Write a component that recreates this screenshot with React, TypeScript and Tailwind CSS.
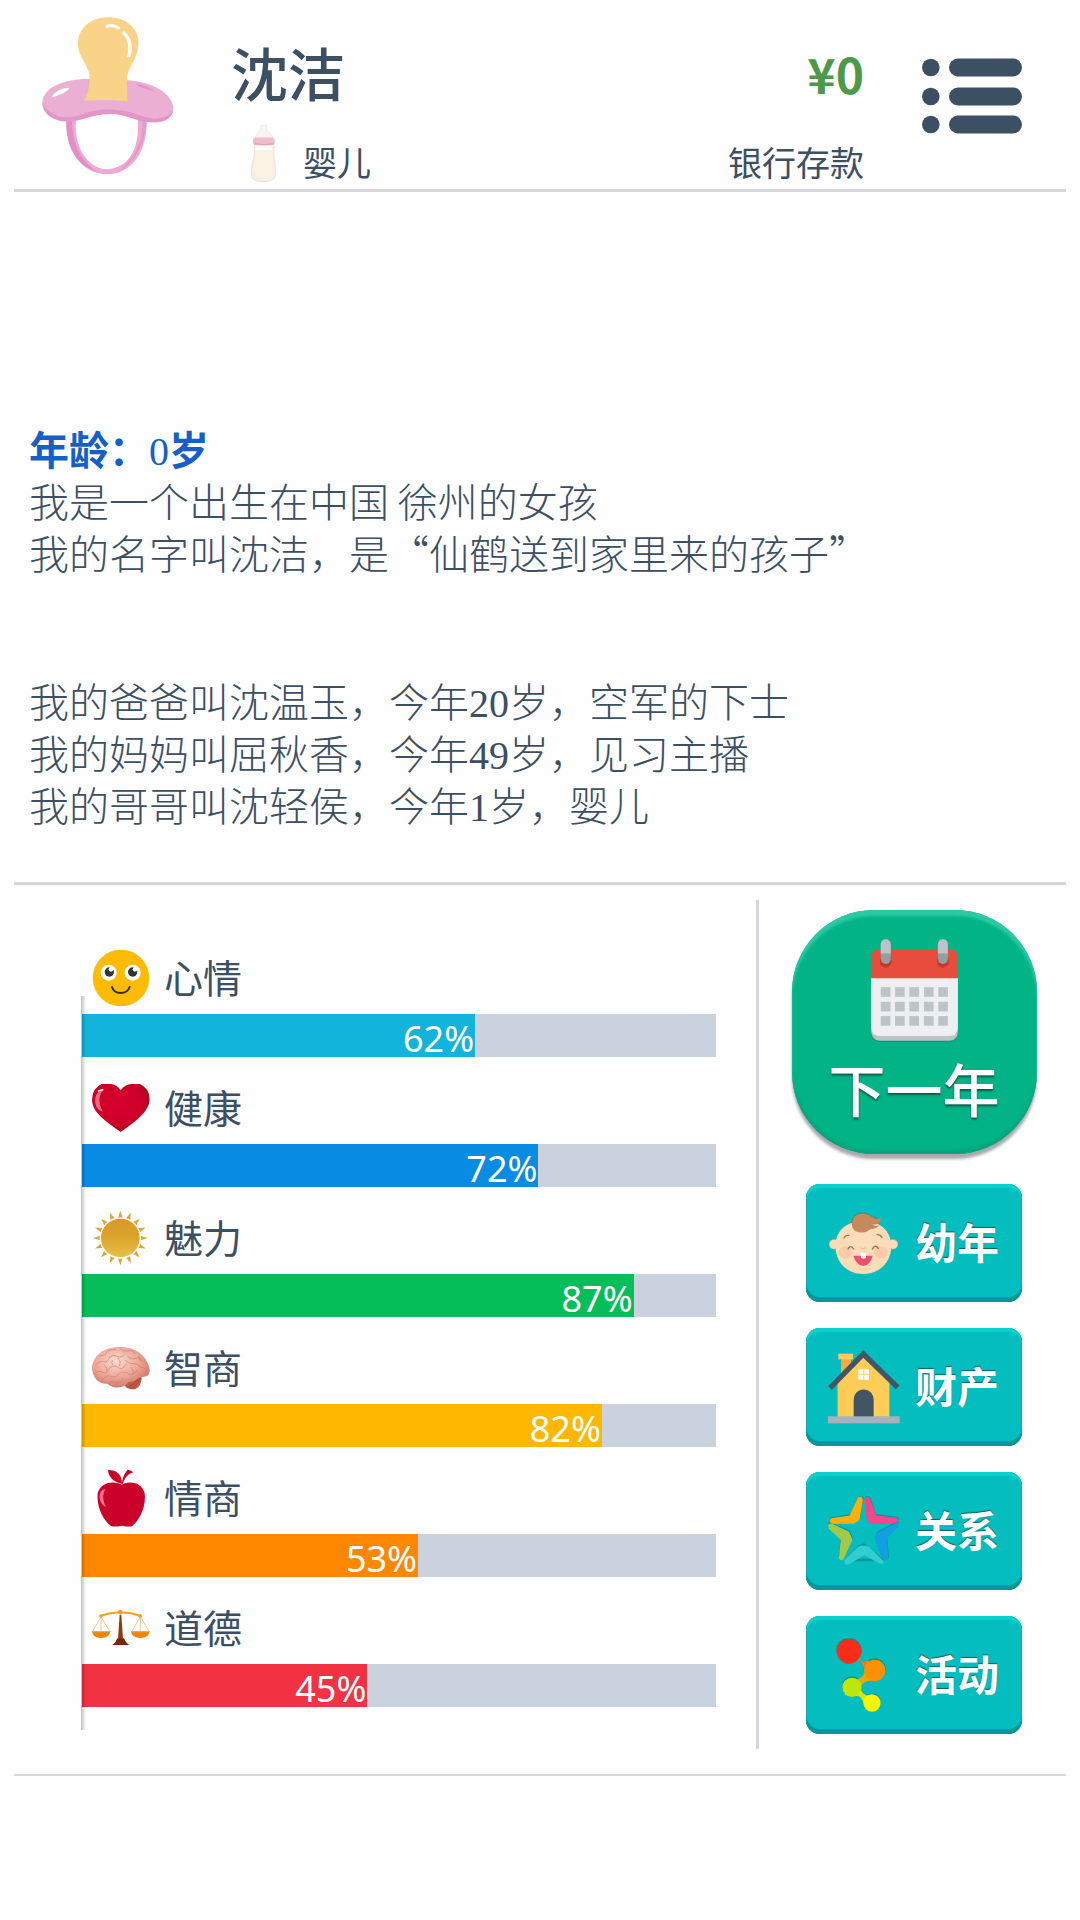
import React from "react";

const SUN_RAYS = Array.from({ length: 16 }, (_, i) => i * 22.5);

function PacifierIcon() {
  return (
    <svg viewBox="124 50 383 474" preserveAspectRatio="none" className="h-[158px] w-[132px] shrink-0" aria-hidden="true">
      <path d="M194 350C188 450 240 520 312 522C385 522 434 450 427 350L401 345C410 430 385 504 312 507C252 505 212 430 224 350Z" fill="#ecaad4" />
      <path d="M196 362C192 445 232 500 280 512C240 480 208 430 212 355Z" fill="#e18fc5" />
      <path d="M427 362C426 425 395 490 345 514C385 480 420 430 415 355Z" fill="#e59acb" />
      <path d="M262 236C190 234 125 262 125 307C125 345 165 364 200 363C240 363 270 338 322 338C372 338 390 365 452 366C482 366 505 350 505 322C500 272 430 240 360 240Z" fill="#ecafd4" />
      <path d="M126 310C128 345 165 364 200 363C240 363 270 341 322 341C372 341 390 365 452 366C482 366 503 350 505 330C490 355 450 360 415 348C370 326 290 318 240 342C195 360 150 350 126 310Z" fill="#e495c8" />
      <path d="M395 250C415 252 435 260 450 272C430 268 410 262 395 250Z" fill="#e495c8" />
      <path d="M316 51C265 51 228 85 228 130C228 172 262 195 262 230C262 262 256 284 246 301Q310 296 372 303L370 240C370 200 404 180 404 125C402 80 365 51 316 51Z" fill="#f8d388" />
      <path d="M313 78Q330 72 346 83M362 98C380 118 384 140 376 166" fill="none" stroke="#fff" strokeWidth="10" strokeLinecap="round" />
      <path d="M156 288C166 274 182 266 200 265C188 277 172 282 156 288Z" fill="#fff" stroke="#fff" strokeWidth="5" strokeLinejoin="round" />
    </svg>
  );
}

function BottleIcon() {
  return (
    <svg viewBox="729 374 74 172" preserveAspectRatio="none" className="h-[57px] w-[25px] shrink-0" aria-hidden="true">
      <path d="M757 377Q766 373 775 377V390Q790 398 795 416H740Q744 398 757 390Z" fill="#faf3ef" stroke="#eee3df" strokeWidth="2" />
      <path d="M739 430H797V455C797 475 801 485 801 510V528Q799 545 766 545Q733 545 731 528V508C731 485 739 475 739 455Z" fill="#f6efe9" stroke="#e6dad4" strokeWidth="2" />
      <path d="M744 452H790V470C790 485 794 495 794 510Q794 533 766 533Q738 533 738 510C738 495 744 485 744 470Z" fill="#fcf3e4" />
      <path d="M742 438H792V450H742Z" fill="#fffdfb" />
      <rect x="735" y="412" width="64" height="22" rx="7" fill="#f1bcc9" />
      <path d="M738 430Q767 437 797 430" stroke="#e3a2b4" strokeWidth="3" fill="none" />
    </svg>
  );
}

function MenuIcon() {
  return (
    <svg viewBox="0 0 100 76" className="h-[76px] w-[100px]" fill="#3c4f63" aria-hidden="true">
      {[0, 29, 57].map((y) => (
        <g key={y}>
          <circle cx="8.8" cy={y + 9.5} r="8.8" />
          <rect x="27" y={y + 0.5} width="73" height="18" rx="9" />
        </g>
      ))}
    </svg>
  );
}

function SmileIcon() {
  return (
    <svg viewBox="97 86 174 174" className="h-full w-full">
      <circle cx="184" cy="173" r="85" fill="#fdbc02" />
      <circle cx="147" cy="157" r="24" fill="#fff" />
      <circle cx="219" cy="157" r="24" fill="#fff" />
      <circle cx="149" cy="155" r="14" fill="#303438" />
      <circle cx="219" cy="155" r="14" fill="#303438" />
      <circle cx="154" cy="147" r="7" fill="#fff" />
      <circle cx="226" cy="147" r="7" fill="#fff" />
      <path d="M157 200C164 224 202 224 210 200" fill="none" stroke="#33302a" strokeWidth="6" strokeLinecap="round" />
    </svg>
  );
}

function HeartIcon() {
  return (
    <svg viewBox="97 476 174 174" className="h-full w-full">
      <defs>
        <radialGradient id="heart" cx="0.45" cy="0.4" r="0.65">
          <stop offset="0" stopColor="#d8002f" />
          <stop offset="0.65" stopColor="#cc0028" />
          <stop offset="1" stopColor="#a10719" />
        </radialGradient>
      </defs>
      <path d="M183 510Q195 492 216 491H240Q270 503 270 538C268 575 225 605 183 635C140 603 98 578 97 538Q98 503 126 491H155Q173 494 183 510Z" fill="url(#heart)" />
      <path d="M110 560C100 530 112 512 131 510C116 524 116 550 130 575Q118 572 110 560Z" fill="#ee8c9c" opacity="0.75" />
      <path d="M116 512L130 508" stroke="#fff" strokeWidth="4" strokeLinecap="round" />
    </svg>
  );
}

function SunIcon() {
  return (
    <svg viewBox="97 865 174 174" className="h-full w-full">
      <defs>
        <linearGradient id="sun" x1="0" y1="0" x2="0" y2="1">
          <stop offset="0" stopColor="#d8982a" />
          <stop offset="0.5" stopColor="#dda42c" />
          <stop offset="1" stopColor="#e8c04e" />
        </linearGradient>
      </defs>
      <circle cx="182" cy="952" r="58" fill="url(#sun)" />
      {SUN_RAYS.map((a) => (
        <path key={a} d="M182 870L189 891Q182 888 175 891Z" transform={`rotate(${a} 182 952)`} fill="#dca634" />
      ))}
    </svg>
  );
}

function BrainIcon() {
  return (
    <svg viewBox="97 54 174 174" className="h-full w-full">
      <defs>
        <radialGradient id="brain" cx="0.42" cy="0.35" r="0.7">
          <stop offset="0" stopColor="#fbd9cf" />
          <stop offset="0.55" stopColor="#eda898" />
          <stop offset="1" stopColor="#cf7060" />
        </radialGradient>
      </defs>
      <path d="M196 180L246 164C247 185 238 203 222 205C208 206 195 200 194 190Z" fill="#c05c4c" />
      <path d="M207 198Q226 190 238 170M216 202Q236 190 243 168" stroke="#93382f" strokeWidth="2" fill="none" />
      <path d="M97 144C98 105 130 78 180 78C225 76 262 102 270 145C271 162 262 168 247 168C235 172 225 182 206 184C195 202 165 206 143 188C120 190 100 174 97 144Z" fill="url(#brain)" />
      <path
        d="M108 132Q120 118 132 122T150 108Q160 98 172 106T196 98M120 105Q138 104 142 94T168 86M180 82Q190 94 206 90T226 98M104 158Q118 146 130 154T150 140Q164 130 176 140T200 128M128 176Q140 160 154 166T178 158Q192 148 206 158T232 148M146 188Q156 176 168 184T190 172M204 106Q214 118 228 112T248 122M196 118Q210 130 222 128T240 138Q252 136 262 150M134 132Q146 142 142 150M176 112Q186 122 180 134M214 140Q224 146 220 158M158 118Q152 126 160 132M240 104Q236 112 240 118"
        stroke="#c57d71"
        strokeWidth="2"
        fill="none"
        strokeLinecap="round"
      />
    </svg>
  );
}

function AppleIcon() {
  return (
    <svg viewBox="97 442 174 174" className="h-full w-full" fill="#cb002b">
      <path d="M186 486C165 482 146 468 145 445C170 444 184 458 187 480C190 462 198 450 204 444Q216 446 221 452C205 456 194 470 190 486Z" />
      <path d="M187 489C205 478 245 478 255 515C260 555 240 595 217 614Q205 616 187 612Q170 616 156 614C130 597 110 555 114 515C125 478 165 478 187 489Z" />
      <path d="M122 538C116 518 122 504 138 503C128 515 128 535 139 556Q128 552 122 538Z" fill="#f29aa8" opacity="0.75" />
    </svg>
  );
}

function ScalesIcon() {
  return (
    <svg viewBox="97 831 174 174" className="h-full w-full">
      <path d="M124 884L99 928M124 884L150 928M242 884L217 928M242 884L268 928M124 884V926M242 884V926" stroke="#d9b078" strokeWidth="2" fill="none" />
      <path d="M122 882Q150 872 182 871Q215 872 244 882" stroke="#f2a01e" strokeWidth="6" fill="none" strokeLinecap="round" />
      <circle cx="182" cy="870" r="7" fill="#f2a01e" />
      <circle cx="124" cy="882" r="5" fill="#f2a01e" />
      <circle cx="242" cy="882" r="5" fill="#f2a01e" />
      <path d="M97 927H152Q150 948 124 948Q99 948 97 927ZM214 927H270Q268 948 242 948Q216 948 214 927Z" fill="#ee8407" />
      <path d="M97 927H152V931H97ZM214 927H270V931H214Z" fill="#f7aa3d" />
      <path d="M180 878H185L190 950H175Z" fill="#8a3c0c" />
      <path d="M173 949H193Q196 960 208 969H158Q170 960 173 949Z" fill="#6f2a07" />
    </svg>
  );
}

function CalendarIcon() {
  return (
    <svg viewBox="393 173 261 310" className="h-[103px] w-[87px]" aria-hidden="true">
      <path d="M393 290H654V460Q650 483 630 483H418Q395 481 393 460Z" fill="#0b7d62" opacity="0.5" />
      <path d="M393 290H654V452Q652 479 630 479H418Q395 477 393 452Z" fill="#bcc4c8" />
      <path d="M393 290H654V440Q652 465 630 465H418Q395 463 393 440Z" fill="#edeff1" />
      <path d="M393 291V228Q395 204 418 204H630Q652 204 654 228V291Z" fill="#e74c3c" />
      {[437, 609].map((x) => (
        <g key={x}>
          <circle cx={x} cy="241" r="18" fill="#c0392b" />
          <rect x={x - 15} y="174" width="30" height="74" rx="15" fill="#929ea1" />
          <path d={`M${x - 15} 217V189A15 15 0 0 1 ${x + 15} 189V217Z`} fill="#bcc4c8" />
        </g>
      ))}
      {[318, 362, 405].map((y) =>
        [422, 465, 508, 552, 595].map((x) => (
          <rect key={`${x}-${y}`} x={x} y={y} width="29" height="29" fill="#bcc4c8" />
        )),
      )}
    </svg>
  );
}

function BabyIcon() {
  return (
    <svg viewBox="145 107 216 222" className="h-full w-full">
      <circle cx="163" cy="222" r="15" fill="#fbdcb8" stroke="#a98f6d" strokeWidth="1.5" />
      <circle cx="340" cy="222" r="15" fill="#fbdcb8" stroke="#a98f6d" strokeWidth="1.5" />
      <path d="M250 152C300 152 333 180 335 226C335 275 300 311 250 311C202 311 167 275 167 226C168 180 202 152 250 152Z" fill="#fbdcb8" />
      <ellipse cx="198" cy="246" rx="21" ry="18" fill="#fac7a5" opacity="0.8" />
      <ellipse cx="304" cy="246" rx="21" ry="18" fill="#fac7a5" opacity="0.8" />
      <path d="M217 166C210 140 235 128 255 130C272 130 280 142 290 146Q300 148 303 140C305 158 295 163 278 163C290 168 296 166 300 163C290 176 277 174 270 178C255 190 232 188 224 180Q218 174 217 166Z" fill="#c58a5c" />
      <path d="M217 158C215 134 240 124 262 130Q282 142 292 144" fill="none" stroke="#7e6548" strokeWidth="2" />
      <path d="M193 203Q197 194 208 195M292 193Q303 192 307 202" fill="none" stroke="#a77950" strokeWidth="4" strokeLinecap="round" />
      <path d="M205 236Q213 222 222 236M278 236Q287 220 296 234" fill="none" stroke="#8a6b4c" strokeWidth="4" strokeLinecap="round" />
      <path d="M243 233Q250 240 257 233" fill="none" stroke="#efb48e" strokeWidth="3" strokeLinecap="round" />
      <path d="M221 256H279Q272 284 251 287Q229 284 221 256Z" fill="#ed4f6f" />
      <path d="M242 248Q251 246 259 250V262Q251 268 244 262Z" fill="#fff" />
      <path d="M238 297Q250 303 262 297" fill="none" stroke="#f1bf95" strokeWidth="2" />
    </svg>
  );
}

function HouseIcon() {
  return (
    <svg viewBox="145 539 216 222" className="h-full w-full">
      <path d="M184 566H214V590L184 618Z" fill="#f8a93c" />
      <rect x="176" y="550" width="44" height="17" fill="#ffcb57" />
      <path d="M174 632L251 558L329 632V741H174Z" fill="#ffcd58" />
      <path d="M200 655V741H174V632Z" fill="#fdc451" opacity="0.5" />
      <path d="M151 653L251 551L354 651" fill="none" stroke="#425567" strokeWidth="16" strokeLinejoin="miter" />
      <rect x="236" y="597" width="32" height="31" rx="3" fill="#fff" />
      <path d="M252 597V628M236 612H268" stroke="#ffd985" strokeWidth="4" />
      <path d="M222 741V690C222 647 282 647 282 690V741Z" fill="#425567" />
      <rect x="145" y="738" width="215" height="21" fill="#a9b1bf" />
    </svg>
  );
}

function StarIcon() {
  return (
    <svg viewBox="145 131 216 222" className="h-full w-full" strokeLinejoin="round">
      <g transform="translate(0 -3)" opacity="0.35" fill="none" stroke="#0b4f5a" strokeWidth="8">
        <path d="M240 144L248 146L236 210L220 218L154 216L155 208L215 198Z" />
        <path d="M260 144L268 144L286 197L352 206V214L275 219L265 205Z" />
        <path d="M352 219L318 265L324 325L314 328L290 268L296 250Z" />
        <path d="M200 332L240 290L253 286L308 332Z" />
        <path d="M150 222L206 246L216 268L190 325L182 326L186 270Z" />
      </g>
      <g strokeWidth="5">
        <path d="M238 142Q248 140 247 150L237 208L222 218H160Q150 216 155 206L211 198Z" fill="#fdb00c" stroke="#fdb00c" />
        <path d="M260 142Q268 140 270 150L288 197L350 205Q356 211 350 215L275 219L264 205L257 150Z" fill="#f5468b" stroke="#f5468b" />
        <path d="M352 220Q356 224 354 228L318 265L324 324Q320 328 314 326L288 270L294 250Z" fill="#149fe2" stroke="#149fe2" />
        <path d="M197 330L236 292Q251 284 267 292L308 332Q310 340 302 338L253 312L206 340Q195 342 197 330Z" fill="#32cdd0" stroke="#32cdd0" />
        <path d="M148 224Q152 220 160 224L206 246L216 268L190 325Q184 330 180 324L186 268L150 234Z" fill="#a2c94a" stroke="#a2c94a" />
      </g>
    </svg>
  );
}

function MoleculeIcon() {
  return (
    <svg viewBox="145 563 216 222" className="h-full w-full">
      <g fill="#0b5f60" opacity="0.45">
        <circle cx="208" cy="600" r="38" />
        <circle cx="285" cy="657" r="33" />
        <circle cx="217" cy="708" r="30" />
        <circle cx="277" cy="756" r="27" />
      </g>
      <path d="M228 625Q250 640 268 630V660Q245 650 240 620Z" fill="#fb7a08" />
      <path d="M256 650C258 675 245 684 230 688L240 722C240 700 262 688 285 690Z" fill="#e9a90b" />
      <path d="M225 738C245 732 248 750 256 768L277 732C262 738 248 735 242 712Z" fill="#d6ec08" />
      <circle cx="208" cy="603" r="37" fill="#fb2d1a" />
      <circle cx="285" cy="660" r="32" fill="#fd9106" />
      <circle cx="217" cy="711" r="29" fill="#bde60d" />
      <circle cx="277" cy="758" r="26" fill="#f9f403" />
    </svg>
  );
}

type Stat = { label: string; value: number; color: string; Icon: () => React.ReactElement };

const STATS: Stat[] = [
  { label: "心情", value: 62, color: "bg-[#13b4dc]", Icon: SmileIcon },
  { label: "健康", value: 72, color: "bg-[#078be3]", Icon: HeartIcon },
  { label: "魅力", value: 87, color: "bg-[#05be59]", Icon: SunIcon },
  { label: "智商", value: 82, color: "bg-[#ffb700]", Icon: BrainIcon },
  { label: "情商", value: 53, color: "bg-[#ff8700]", Icon: AppleIcon },
  { label: "道德", value: 45, color: "bg-[#f23142]", Icon: ScalesIcon },
];

const ACTIONS = [
  { label: "幼年", Icon: BabyIcon },
  { label: "财产", Icon: HouseIcon },
  { label: "关系", Icon: StarIcon },
  { label: "活动", Icon: MoleculeIcon },
];

const BIRTH = ["我是一个出生在中国 徐州的女孩", "我的名字叫沈洁，是“仙鹤送到家里来的孩子”"];
const FAMILY = [
  "我的爸爸叫沈温玉，今年20岁，空军的下士",
  "我的妈妈叫屈秋香，今年49岁，见习主播",
  "我的哥哥叫沈轻侯，今年1岁，婴儿",
];

/* Numerals are set in a serif face, the surrounding text in the CJK face. */
function StoryLine({ text }: { text: string }) {
  return (
    <p>
      {text.split(/(\d+)/).map((part, i) =>
        /^\d+$/.test(part) ? (
          <span key={i} className="font-['Liberation_Serif',serif] leading-none font-normal">
            {part}
          </span>
        ) : (
          part
        ),
      )}
    </p>
  );
}

function StatRow({ label, value, color, Icon }: Stat) {
  return (
    <li className="pt-[22px]">
      <div className="flex h-[58px] items-start gap-[14px] pl-[10px]">
        <span className="h-[58px] w-[58px]" aria-hidden="true">
          <Icon />
        </span>
        <span className="text-[39px] leading-[54px]">{label}</span>
      </div>
      <div
        className="mt-[7px] h-[43px] bg-[#c9d2dd]"
        role="progressbar"
        aria-label={label}
        aria-valuenow={value}
        aria-valuemin={0}
        aria-valuemax={100}
      >
        <div className={`flex h-full justify-end pr-px ${color}`} style={{ width: `${value}%` }}>
          <span className="font-['Noto_Sans',sans-serif] text-[36px] leading-[50px] text-white">{value}%</span>
        </div>
      </div>
    </li>
  );
}

export default function App() {
  return (
    <main
      lang="zh-CN"
      className="min-h-screen bg-[#fefefe] px-[14px] font-['Noto_Sans_CJK_SC',sans-serif] text-[#3c4f63]"
    >
      <header className="flex border-b-[3px] border-[#d6d6dc] pr-[44px] pb-[7px] pl-[28px]">
        <div className="pt-[17px]">
          <PacifierIcon />
        </div>
        <div className="ml-[57px] flex flex-1 flex-col gap-6 pt-[41px]">
          <h1 className="text-[57px] leading-[60px] font-medium">沈洁</h1>
          <div className="flex items-end gap-[27px] pl-[20px]">
            <BottleIcon />
            <span className="text-[34px] leading-[40px]">婴儿</span>
          </div>
        </div>
        <div className="flex flex-col justify-between pt-[41px] text-right">
          <strong className="text-[48px] leading-[64px] font-bold text-[#4c9a48]">¥0</strong>
          <span className="text-[34px] leading-[40px]">银行存款</span>
        </div>
        <button type="button" aria-label="菜单" className="mt-[58px] ml-[58px] h-[76px] w-[100px]">
          <MenuIcon />
        </button>
      </header>

      <section className="flex min-h-[693px] flex-col justify-end border-b-[3px] border-[#d6d6dc] px-[15px] pb-[52px] text-[40px] leading-[52px] font-light">
        <h2 className="font-bold text-[#1560c6]">
          <StoryLine text="年龄：0岁" />
        </h2>
        {BIRTH.map((t) => (
          <StoryLine key={t} text={t} />
        ))}
        <div className="mt-24">
          {FAMILY.map((t) => (
            <StoryLine key={t} text={t} />
          ))}
        </div>
      </section>

      <section className="flex border-b-2 border-[#d8d8da] pt-[15px] pb-[25px]">
        <div className="flex-1 pr-[40px] pl-[68px]">
          <div className="relative pt-[27px]">
            <ul>
              {STATS.map((s) => (
                <StatRow key={s.label} {...s} />
              ))}
            </ul>
            <div className="absolute top-[96px] -bottom-[23px] -left-px w-[5px] bg-linear-to-r from-black/25 to-black/0" />
          </div>
        </div>
        <div className="flex w-[310px] flex-col items-center border-l-[3px] border-[#d6d6dc] pt-[10px] pb-[15px] pl-[3px]">
          <button
            type="button"
            className="flex h-[244px] w-[245px] flex-col items-center rounded-[82px] bg-[#02b386] pt-[29px] shadow-[inset_0_6px_3px_#2bcaa3,inset_0_-4px_3px_#04a47c,0_5px_3px_#a9a9ad]"
          >
            <CalendarIcon />
            <span className="mt-[13px] text-[57px] leading-[64px] font-medium text-white [text-shadow:0_2px_2px_#0b5b47]">
              下一年
            </span>
          </button>
          <div className="mt-[30px] flex flex-col gap-[26px]">
            {ACTIONS.map(({ label, Icon }) => (
              <button
                key={label}
                type="button"
                className="flex h-[118px] w-[216px] items-center gap-[15px] rounded-[14px] bg-[#04bdbf] pl-[22px] shadow-[inset_0_-5px_0_#03979a,inset_0_4px_1px_#05d2ce,inset_0_0_0_1px_#1a9fa1]"
              >
                <span className="h-[74px] w-[72px]" aria-hidden="true">
                  <Icon />
                </span>
                <span className="pb-1 text-[42px] leading-[58px] font-bold text-white [text-shadow:0_-1px_1px_#0b5b5c]">
                  {label}
                </span>
              </button>
            ))}
          </div>
        </div>
      </section>
    </main>
  );
}
